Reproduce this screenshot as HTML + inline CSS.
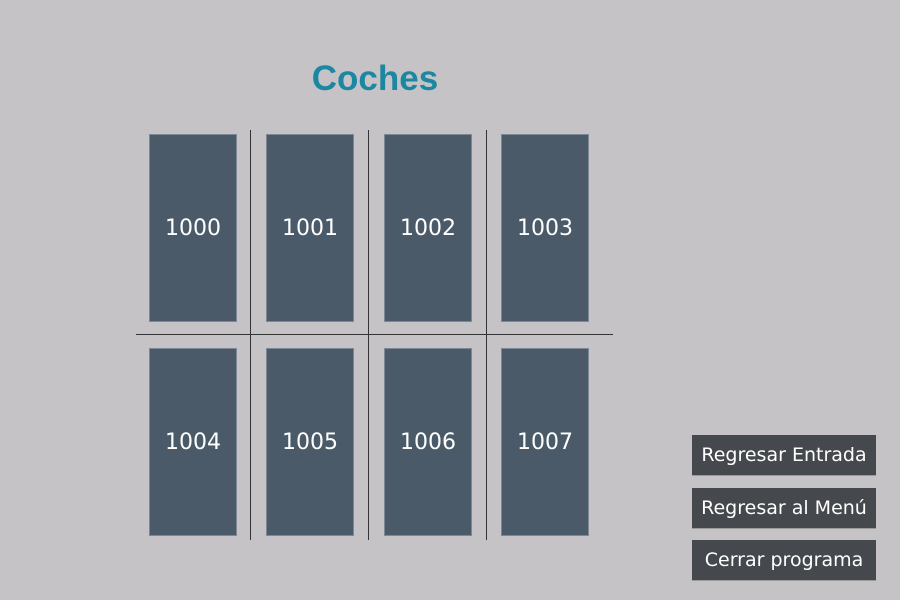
<!DOCTYPE html>
<html><head><style>
body{margin:0;width:900px;height:600px;background:#c5c3c6;position:relative;overflow:hidden;font-family:"DejaVu Sans","Liberation Sans",sans-serif}
.t{position:absolute;left:0;width:750px;top:59px;text-align:center;font:bold 35px "Liberation Sans",sans-serif;color:#1b87a0}
.b{position:absolute;width:86px;height:186px;background:#4a5a68;color:#fff;font-size:22px;display:flex;align-items:center;justify-content:center;box-shadow:0 0 0 1px #7d8894}
.v{position:absolute;width:1px;top:130px;height:410px;background:#333}
.h{position:absolute;left:136px;width:477px;top:334px;height:1px;background:#333}
.btn{position:absolute;left:692px;width:184px;height:40px;background:#45484c;color:#fff;font-size:19px;display:flex;align-items:center;justify-content:center;box-shadow:0 1px 0 #999}
</style></head><body>
<div class="t">Coches</div>
<div class="v" style="left:250px"></div><div class="v" style="left:368px"></div><div class="v" style="left:486px"></div>
<div class="h"></div>
<div class="b" style="left:150px;top:135px">1000</div>
<div class="b" style="left:267px;top:135px">1001</div>
<div class="b" style="left:385px;top:135px">1002</div>
<div class="b" style="left:502px;top:135px">1003</div>
<div class="b" style="left:150px;top:349px">1004</div>
<div class="b" style="left:267px;top:349px">1005</div>
<div class="b" style="left:385px;top:349px">1006</div>
<div class="b" style="left:502px;top:349px">1007</div>
<div class="btn" style="top:435px">Regresar Entrada</div>
<div class="btn" style="top:488px">Regresar al Menú</div>
<div class="btn" style="top:540px">Cerrar programa</div>
</body></html>
